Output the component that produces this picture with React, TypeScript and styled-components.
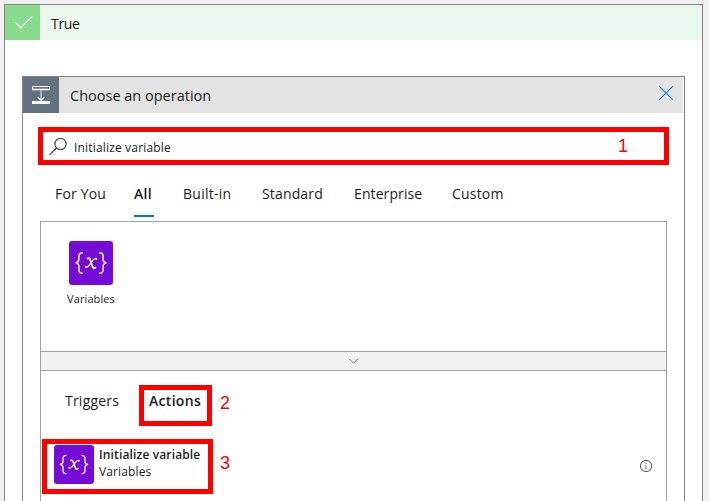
import React from "react";
import styled, { createGlobalStyle } from "styled-components";

const GlobalStyle = createGlobalStyle`
  * { box-sizing: border-box; }
  body {
    margin: 0;
    overflow: hidden;
    background: #f1f0f1;
    color: #1c1c1c;
    font-family: "Open Sans", "Noto Sans", sans-serif;
  }
`;

const Page = styled.main`
  height: 501px;
  padding: 4px 6px 0 4px;
  overflow: hidden;
`;

const Branch = styled.section`
  height: 510px;
  border: 1px solid #868282;
  background: #fff;
`;

const BranchHeader = styled.header`
  display: flex;
  align-items: center;
  height: 35px;
  background: #ecf7ee;
`;

const BranchIcon = styled.div`
  width: 35px;
  height: 35px;
  background: #88da8d;
`;

const Label = styled.span<{ $size: number; $spacing?: number; $weight?: number; $line?: number }>`
  display: block;
  white-space: nowrap;
  font-size: ${(p) => p.$size}px;
  font-weight: ${(p) => p.$weight ?? 400};
  letter-spacing: ${(p) => p.$spacing ?? 0}px;
  line-height: ${(p) => p.$line ?? 20}px;
`;

const BranchTitle = styled(Label)`
  margin: 3px 0 0 11px;
`;

const Card = styled.section`
  height: 440px;
  margin: 36px 17px 0;
  border: 1px solid #868282;
`;

const CardHeader = styled.header`
  display: flex;
  align-items: center;
  height: 36px;
  margin-right: 1px;
  background: #e3e3e3;
`;

const CardIcon = styled.div`
  width: 36px;
  height: 36px;
  background: #64717e;
`;

const CardTitle = styled(Label)`
  flex: 1;
  margin: 2px 0 0 11px;
`;

const CloseButton = styled.button`
  display: block;
  width: 16px;
  height: 16px;
  margin: -4px 9px 0 0;
  padding: 0;
  border: 0;
  background: none;
`;

const SearchBox = styled.div`
  display: flex;
  align-items: center;
  width: 631px;
  height: 38px;
  margin: 14px 0 0 15px;
  padding: 0 36px 0 5px;
  border: 5px solid #fe0000;

  svg { flex: none; }
`;

const SearchText = styled(Label)`
  flex: 1;
  margin: 3px 0 0 7px;
`;

const StepNumber = styled.span`
  color: #fe0000;
  font: 18px/20px "Liberation Sans", Arial, sans-serif;
`;

const SearchStep = styled(StepNumber)`
  margin-top: -1px;
`;

const Tabs = styled.nav`
  display: flex;
  height: 56px;
  padding: 19px 0 0 32px;
`;

const Tab = styled.div<{ $width: number; $active?: boolean }>`
  width: ${(p) => p.$width}px;
  height: 33px;
  margin-right: ${(p) => (p.$active ? 29 : 28)}px;
  border-bottom: 2px solid ${(p) => (p.$active ? "#0078d4" : "transparent")};
`;

const Results = styled.div`
  width: 627px;
  height: 300px;
  margin-left: 17px;
  border: 1px solid #a2a2a2;
`;

const Connectors = styled.div`
  height: 129px;
  padding: 19px 0 0 25px;
`;

const Connector = styled.div`
  display: flex;
  flex-direction: column;
  align-items: center;
  width: 50px;
`;

const Tile = styled.div<{ $width: number; $height: number }>`
  flex: none;
  width: ${(p) => p.$width}px;
  height: ${(p) => p.$height}px;
  border-radius: 3px;
  background: #770bd6;

  svg { display: block; width: 100%; height: 100%; }
`;

const ConnectorName = styled(Label)`
  margin-top: 4px;
`;

const Divider = styled.div`
  display: flex;
  justify-content: center;
  height: 20px;
  padding-top: 6px;
  border: solid #a2a2a2;
  border-width: 1px 0;
  background: #f2f2f2;
`;

const KindTabs = styled.div`
  display: flex;
  height: 55px;
  padding: 14px 0 0 24px;
`;

const Triggers = styled(Label)`
  width: 74px;
  margin-top: 6px;
`;

const Actions = styled.div`
  width: 73px;
  height: 41px;
  margin-right: 8px;
  padding: 1px 0 0 5px;
  border: 5px solid #fe0000;
`;

const KindStep = styled(StepNumber)`
  margin-top: 8px;
`;

const Operation = styled.div`
  display: flex;
  align-items: center;
  height: 55px;
  margin: 13px 0 0 1px;
`;

const OperationMain = styled.div`
  display: flex;
  width: 171px;
  height: 55px;
  margin-right: 7px;
  padding: 1px 0 0 7px;
  border: 5px solid #fe0000;
`;

const OperationText = styled.div`
  margin: 1px 0 0 5px;
`;

const OperationStep = styled(StepNumber)`
  flex: 1;
  margin-top: -7px;
`;

const InfoSlot = styled.div`
  width: 14px;
  height: 14px;
  margin: -1px 13px 0 0;

  svg { display: block; }
`;

const CheckIcon = () => (
  <svg width="35" height="35" fill="none" stroke="#fff" strokeWidth="1.2">
    <path d="M10.2 17.2 15.7 22.7 27.2 11.6" />
  </svg>
);

const OperationIcon = () => (
  <svg width="36" height="36" fill="none">
    <path d="M9 12.5h18" stroke="#b9c0c7" strokeWidth="2" />
    <path d="M9.5 9.5h17v3h-17z" stroke="#fff" />
    <path d="M18 13v9" stroke="#c5cbd1" strokeWidth="1.4" />
    <path d="m14.8 20.2 3.2 3 3.2-3" stroke="#fff" strokeWidth="1.2" />
    <path d="M9 24h18v3H9z" fill="#fff" />
  </svg>
);

const CloseIcon = () => (
  <svg width="16" height="16" fill="none" stroke="#087fd5" strokeWidth="1.1">
    <path d="m1.3 1.3 13.4 13.4m0-13.4L1.3 14.7" />
  </svg>
);

const SearchIcon = () => (
  <svg width="19" height="19" fill="none" stroke="#4a4a4a" strokeWidth="1.2">
    <circle cx="12.5" cy="7" r="5.6" />
    <path d="m8.4 11-6.9 6.9" />
  </svg>
);

const VariableIcon = () => (
  <svg viewBox="0 0 44 44" preserveAspectRatio="none" fill="none" stroke="#fff" strokeWidth="1.4">
    <path d="M13.8 11.7c-3.2 0-3.9 1-3.9 3.3v3.5c0 2.1-.8 3-3.4 3.4 2.6.4 3.4 1.5 3.4 3.5V29c0 2.4.8 3.3 3.9 3.3" />
    <path d="M30.2 11.7c3.2 0 3.9 1 3.9 3.3v3.5c0 2.1.8 3 3.4 3.4-2.6.4-3.4 1.5-3.4 3.5V29c0 2.4-.8 3.3-3.9 3.3" />
    <path d="M18 17.9c1.1-1.1 2.3-1.2 2.9.4l2.8 7.8c.6 1.6 1.7 1.8 3.2-.1" strokeWidth="1.7" />
    <path d="M27.9 17.5c-1.5-.7-2.7.1-3.8 1.5l-4 5.3c-1.1 1.5-2.1 2.4-3.8 1.8" strokeWidth="1.2" />
    <g fill="#fff" stroke="none"><circle cx="27.2" cy="18" r="1" /><circle cx="16.9" cy="25.7" r="1" /></g>
  </svg>
);

const ChevronIcon = () => (
  <svg width="11" height="7" fill="none" stroke="#777">
    <path d="m1 .7 4.5 4.5L10 .7" />
  </svg>
);

const InfoIcon = () => (
  <svg width="14" height="14" fill="none" stroke="#555">
    <circle cx="7" cy="7" r="5.6" />
    <path d="M7 6v4M7 4v1" stroke="#777" />
  </svg>
);

const tabs = [
  { name: "For You", width: 51, spacing: 0.16 },
  { name: "All", width: 20, spacing: 0.3, active: true },
  { name: "Built-in", width: 51, spacing: 0.25 },
  { name: "Standard", width: 64, spacing: 0.15 },
  { name: "Enterprise", width: 70, spacing: 0.1 },
  { name: "Custom", width: 60, spacing: 0.2 },
];

export default function App() {
  return (
    <Page>
      <GlobalStyle />
      <Branch>
        <BranchHeader>
          <BranchIcon><CheckIcon /></BranchIcon>
          <BranchTitle $size={14} $spacing={-0.3}>True</BranchTitle>
        </BranchHeader>
        <Card>
          <CardHeader>
            <CardIcon><OperationIcon /></CardIcon>
            <CardTitle $size={14.5}>Choose an operation</CardTitle>
            <CloseButton aria-label="Close"><CloseIcon /></CloseButton>
          </CardHeader>
          <SearchBox>
            <SearchIcon />
            <SearchText $size={12} $spacing={0.17}>Initialize variable</SearchText>
            <SearchStep>1</SearchStep>
          </SearchBox>
          <Tabs>
            {tabs.map((tab) => (
              <Tab key={tab.name} $width={tab.width} $active={tab.active}>
                <Label $size={14} $spacing={tab.spacing} $weight={tab.active ? 600 : 400}>{tab.name}</Label>
              </Tab>
            ))}
          </Tabs>
          <Results>
            <Connectors>
              <Connector>
                <Tile $width={44} $height={44}><VariableIcon /></Tile>
                <ConnectorName $size={11} $spacing={0.1}>Variables</ConnectorName>
              </Connector>
            </Connectors>
            <Divider><ChevronIcon /></Divider>
            <KindTabs>
              <Triggers $size={14} $spacing={0.22}>Triggers</Triggers>
              <Actions><Label $size={14} $spacing={0.3} $weight={600}>Actions</Label></Actions>
              <KindStep>2</KindStep>
            </KindTabs>
            <Operation>
              <OperationMain>
                <Tile $width={40} $height={39}><VariableIcon /></Tile>
                <OperationText>
                  <Label $size={12} $spacing={0.14} $weight={600} $line={17}>Initialize variable</Label>
                  <Label $size={12} $spacing={0.12} $line={17}>Variables</Label>
                </OperationText>
              </OperationMain>
              <OperationStep>3</OperationStep>
              <InfoSlot><InfoIcon /></InfoSlot>
            </Operation>
          </Results>
        </Card>
      </Branch>
    </Page>
  );
}
